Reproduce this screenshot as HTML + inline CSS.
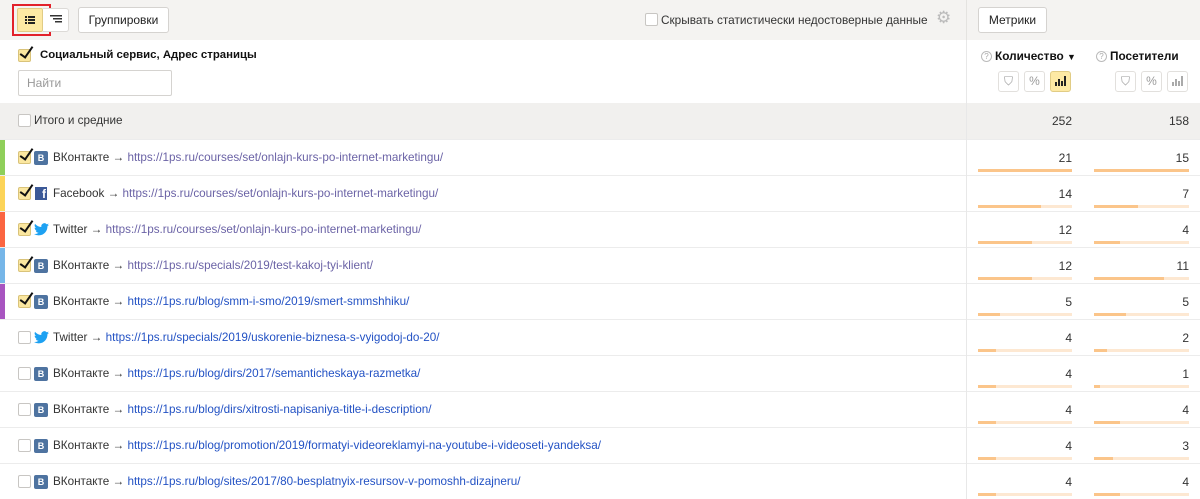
<!DOCTYPE html>
<html><head><meta charset="utf-8"><style>
*{box-sizing:border-box;margin:0;padding:0}
body{width:1200px;height:499px;overflow:hidden;background:#fff;font-family:"Liberation Sans",Arial,sans-serif;font-size:12px;color:#333;position:relative}
.a{position:absolute}
.btn{position:absolute;border:1px solid #d5d3d0;border-radius:3px;background:#fff;font-size:12px;text-align:center;color:#222}
.cb{position:absolute;width:13px;height:13px;border:1px solid #c8c6c3;border-radius:2px;background:#fff}
.cb.on{background:#fbe7a0;border-color:#d9c37a}
.cb.on::after{content:"";position:absolute;left:4px;top:-6px;width:5px;height:12px;border-right:2px solid #111;border-bottom:2px solid #111;transform:rotate(35deg)}
.row{position:absolute;left:0;width:1200px;height:36px;border-top:1px solid #ececec}
.strip{position:absolute;left:0;top:0;width:5px;height:36px}
.txt{position:absolute;left:53px;top:11px;white-space:nowrap;color:#333;font-size:11.7px}
.vk{position:absolute;left:34px;top:11px;width:14px;height:14px;background:#4e73a0;border-radius:2px;color:#fff;font-size:9px;font-weight:bold;text-align:center;line-height:14px}
.fb{position:absolute;left:35px;top:11px;width:12px;height:13px;background:#3b5998;color:#fff;font-size:12px;font-weight:bold;text-align:right;line-height:15px;padding-right:1px;overflow:hidden}
.tw{position:absolute;left:34px;top:11px}
.num{position:absolute;top:11px;text-align:right;width:60px}
.trk{position:absolute;top:29px;height:3px;background:#fde8d2}
.fil{position:absolute;left:0;top:0;height:3px;background:#fbc58a}
.v{color:#6b63a6}.b{color:#2352c4}
.ib{position:absolute;width:21px;height:21px;border:1px solid #e2e0dd;border-radius:3px;background:#fff;color:#999;text-align:center;line-height:19px;font-size:12px}
</style></head><body>
<div class="a" style="left:0;top:0;width:1200px;height:40px;background:#f4f3f1"></div>
<div class="a" style="left:0;top:103px;width:1200px;height:36px;background:#f1f0ee"></div>
<div class="a" style="left:966px;top:0;width:1px;height:40px;background:#e4e3e0"></div>

<div class="a" style="left:12px;top:4px;width:39px;height:32px;border:2px solid #e2212a"></div>
<div class="a" style="left:17px;top:8px;width:26px;height:24px;background:#fde9a4;border:1px solid #e1cc85;border-radius:2px"></div>
<svg class="a" style="left:25px;top:16px" width="10" height="8"><rect x="0" y="0" width="2" height="2" fill="#222"/><rect x="3" y="0" width="7" height="2" fill="#222"/><rect x="0" y="3" width="2" height="2" fill="#222"/><rect x="3" y="3" width="7" height="2" fill="#222"/><rect x="0" y="6" width="2" height="2" fill="#222"/><rect x="3" y="6" width="7" height="2" fill="#222"/></svg>
<div class="a" style="left:43px;top:8px;width:26px;height:24px;border:1px solid #dcdad7;border-left:none;border-radius:0 3px 3px 0;background:#fff"></div>
<svg class="a" style="left:50px;top:15px" width="12" height="9"><rect x="0" y="0" width="12" height="1.5" fill="#333"/><rect x="3" y="3" width="9" height="1.5" fill="#333"/><rect x="5" y="6" width="7" height="1.5" fill="#333"/></svg>
<div class="btn" style="left:78px;top:7px;width:91px;height:26px;line-height:24px">Группировки</div>

<div class="cb" style="left:645px;top:13px"></div>
<div class="a" style="left:661px;top:13px;font-size:11.8px;color:#333;white-space:nowrap">Скрывать статистически недостоверные данные</div>
<div class="a" style="left:936px;top:9px;color:#bbb;font-size:17px;line-height:18px">⚙</div>
<div class="btn" style="left:978px;top:7px;width:69px;height:26px;line-height:24px">Метрики</div>

<div class="cb on" style="left:18px;top:49px"></div>
<div class="a" style="left:40px;top:49px;font-weight:bold;font-size:11.4px;color:#111;white-space:nowrap">Социальный сервис, Адрес страницы</div>
<div class="a" style="left:18px;top:70px;width:154px;height:26px;border:1px solid #d5d3d0;border-radius:2px;padding:5px 8px;color:#999;font-size:12px">Найти</div>

<div class="a" style="left:981px;top:51px;width:11px;height:11px;border:1px solid #bbb;border-radius:50%;font-size:8px;color:#aaa;text-align:center;line-height:9px">?</div>
<div class="a" style="left:995px;top:49px;font-weight:bold;color:#111;font-size:11.8px;white-space:nowrap">Количество <span style="font-size:9px">▼</span></div>
<div class="a" style="left:1096px;top:51px;width:11px;height:11px;border:1px solid #bbb;border-radius:50%;font-size:8px;color:#aaa;text-align:center;line-height:9px">?</div>
<div class="a" style="left:1110px;top:49px;font-weight:bold;color:#111;font-size:11.8px">Посетители</div>

<div class="ib" style="left:998px;top:71px">⛉</div>
<div class="ib" style="left:1024px;top:71px">%</div>
<div class="ib" style="left:1050px;top:71px;background:#fde9a4;border-color:#e1cc85"><svg width="12" height="10" style="margin-top:4px"><rect x="0" y="6" width="2" height="4" fill="#222"/><rect x="3" y="3" width="2" height="7" fill="#222"/><rect x="6" y="5" width="2" height="5" fill="#222"/><rect x="9" y="0" width="2" height="10" fill="#222"/></svg></div>
<div class="ib" style="left:1115px;top:71px">⛉</div>
<div class="ib" style="left:1141px;top:71px">%</div>
<div class="ib" style="left:1167px;top:71px"><svg width="12" height="10" style="margin-top:4px"><rect x="0" y="6" width="2" height="4" fill="#aaa"/><rect x="3" y="3" width="2" height="7" fill="#aaa"/><rect x="6" y="5" width="2" height="5" fill="#aaa"/><rect x="9" y="0" width="2" height="10" fill="#aaa"/></svg></div>

<div class="cb" style="left:18px;top:114px"></div>
<div class="a" style="left:34px;top:114px;color:#333;font-size:11.7px">Итого и средние</div>
<div class="num" style="left:1012px;top:114px">252</div>
<div class="num" style="left:1129px;top:114px">158</div>

<div class="row" style="top:139px"><div class="strip" style="background:#8fcf5a"></div><div class="cb on" style="left:18px;top:11px"></div><div class="vk">В</div><div class="txt">ВКонтакте → <span class="v">https://1ps.ru/courses/set/onlajn-kurs-po-internet-marketingu/</span></div><div class="num" style="left:1012px">21</div><div class="trk" style="left:978px;width:94px"><div class="fil" style="width:94px"></div></div><div class="num" style="left:1129px">15</div><div class="trk" style="left:1094px;width:95px"><div class="fil" style="width:95px"></div></div></div>

<div class="row" style="top:175px"><div class="strip" style="background:#fcd458"></div><div class="cb on" style="left:18px;top:11px"></div><div class="fb">f</div><div class="txt">Facebook → <span class="v">https://1ps.ru/courses/set/onlajn-kurs-po-internet-marketingu/</span></div><div class="num" style="left:1012px">14</div><div class="trk" style="left:978px;width:94px"><div class="fil" style="width:63px"></div></div><div class="num" style="left:1129px">7</div><div class="trk" style="left:1094px;width:95px"><div class="fil" style="width:44px"></div></div></div>

<div class="row" style="top:211px"><div class="strip" style="background:#fb6541"></div><div class="cb on" style="left:18px;top:11px"></div><svg class="tw" width="15" height="13" viewBox="0 0 24 20"><path d="M24 2.4a10 10 0 0 1-2.8.8A5 5 0 0 0 23.3.4a10 10 0 0 1-3.1 1.2A4.9 4.9 0 0 0 11.8 6 14 14 0 0 1 1.7.9a4.9 4.9 0 0 0 1.5 6.6A4.9 4.9 0 0 1 1 6.9a4.9 4.9 0 0 0 3.9 4.8 5 5 0 0 1-2.2.1 4.9 4.9 0 0 0 4.6 3.4A9.900 9.900 0 0 1 0 17.2 14 14 0 0 0 7.5 19.4c9.1 0 14-7.5 14-14v-.6A10 10 0 0 0 24 2.4z" fill="#1da1f2"/></svg><div class="txt">Twitter → <span class="v">https://1ps.ru/courses/set/onlajn-kurs-po-internet-marketingu/</span></div><div class="num" style="left:1012px">12</div><div class="trk" style="left:978px;width:94px"><div class="fil" style="width:54px"></div></div><div class="num" style="left:1129px">4</div><div class="trk" style="left:1094px;width:95px"><div class="fil" style="width:26px"></div></div></div>

<div class="row" style="top:247px"><div class="strip" style="background:#76b6e8"></div><div class="cb on" style="left:18px;top:11px"></div><div class="vk">В</div><div class="txt">ВКонтакте → <span class="v">https://1ps.ru/specials/2019/test-kakoj-tyi-klient/</span></div><div class="num" style="left:1012px">12</div><div class="trk" style="left:978px;width:94px"><div class="fil" style="width:54px"></div></div><div class="num" style="left:1129px">11</div><div class="trk" style="left:1094px;width:95px"><div class="fil" style="width:70px"></div></div></div>

<div class="row" style="top:283px"><div class="strip" style="background:#a855c0"></div><div class="cb on" style="left:18px;top:11px"></div><div class="vk">В</div><div class="txt">ВКонтакте → <span class="b">https://1ps.ru/blog/smm-i-smo/2019/smert-smmshhiku/</span></div><div class="num" style="left:1012px">5</div><div class="trk" style="left:978px;width:94px"><div class="fil" style="width:22px"></div></div><div class="num" style="left:1129px">5</div><div class="trk" style="left:1094px;width:95px"><div class="fil" style="width:32px"></div></div></div>

<div class="row" style="top:319px"><div class="cb" style="left:18px;top:11px"></div><svg class="tw" width="15" height="13" viewBox="0 0 24 20"><path d="M24 2.4a10 10 0 0 1-2.8.8A5 5 0 0 0 23.3.4a10 10 0 0 1-3.1 1.2A4.9 4.9 0 0 0 11.8 6 14 14 0 0 1 1.7.9a4.9 4.9 0 0 0 1.5 6.6A4.9 4.9 0 0 1 1 6.9a4.9 4.9 0 0 0 3.9 4.8 5 5 0 0 1-2.2.1 4.9 4.9 0 0 0 4.6 3.4A9.9 9.9 0 0 1 0 17.2 14 14 0 0 0 7.5 19.4c9.1 0 14-7.5 14-14v-.6A10 10 0 0 0 24 2.4z" fill="#1da1f2"/></svg><div class="txt">Twitter → <span class="b">https://1ps.ru/specials/2019/uskorenie-biznesa-s-vyigodoj-do-20/</span></div><div class="num" style="left:1012px">4</div><div class="trk" style="left:978px;width:94px"><div class="fil" style="width:18px"></div></div><div class="num" style="left:1129px">2</div><div class="trk" style="left:1094px;width:95px"><div class="fil" style="width:13px"></div></div></div>

<div class="row" style="top:355px"><div class="cb" style="left:18px;top:11px"></div><div class="vk">В</div><div class="txt">ВКонтакте → <span class="b">https://1ps.ru/blog/dirs/2017/semanticheskaya-razmetka/</span></div><div class="num" style="left:1012px">4</div><div class="trk" style="left:978px;width:94px"><div class="fil" style="width:18px"></div></div><div class="num" style="left:1129px">1</div><div class="trk" style="left:1094px;width:95px"><div class="fil" style="width:6px"></div></div></div>

<div class="row" style="top:391px"><div class="cb" style="left:18px;top:11px"></div><div class="vk">В</div><div class="txt">ВКонтакте → <span class="b">https://1ps.ru/blog/dirs/xitrosti-napisaniya-title-i-description/</span></div><div class="num" style="left:1012px">4</div><div class="trk" style="left:978px;width:94px"><div class="fil" style="width:18px"></div></div><div class="num" style="left:1129px">4</div><div class="trk" style="left:1094px;width:95px"><div class="fil" style="width:26px"></div></div></div>

<div class="row" style="top:427px"><div class="cb" style="left:18px;top:11px"></div><div class="vk">В</div><div class="txt">ВКонтакте → <span class="b">https://1ps.ru/blog/promotion/2019/formatyi-videoreklamyi-na-youtube-i-videoseti-yandeksa/</span></div><div class="num" style="left:1012px">4</div><div class="trk" style="left:978px;width:94px"><div class="fil" style="width:18px"></div></div><div class="num" style="left:1129px">3</div><div class="trk" style="left:1094px;width:95px"><div class="fil" style="width:19px"></div></div></div>

<div class="row" style="top:463px"><div class="cb" style="left:18px;top:11px"></div><div class="vk">В</div><div class="txt">ВКонтакте → <span class="b">https://1ps.ru/blog/sites/2017/80-besplatnyix-resursov-v-pomoshh-dizajneru/</span></div><div class="num" style="left:1012px">4</div><div class="trk" style="left:978px;width:94px"><div class="fil" style="width:18px"></div></div><div class="num" style="left:1129px">4</div><div class="trk" style="left:1094px;width:95px"><div class="fil" style="width:26px"></div></div></div>

<div class="a" style="left:966px;top:40px;width:1px;height:459px;background:#e8e8e8"></div>
</body></html>
